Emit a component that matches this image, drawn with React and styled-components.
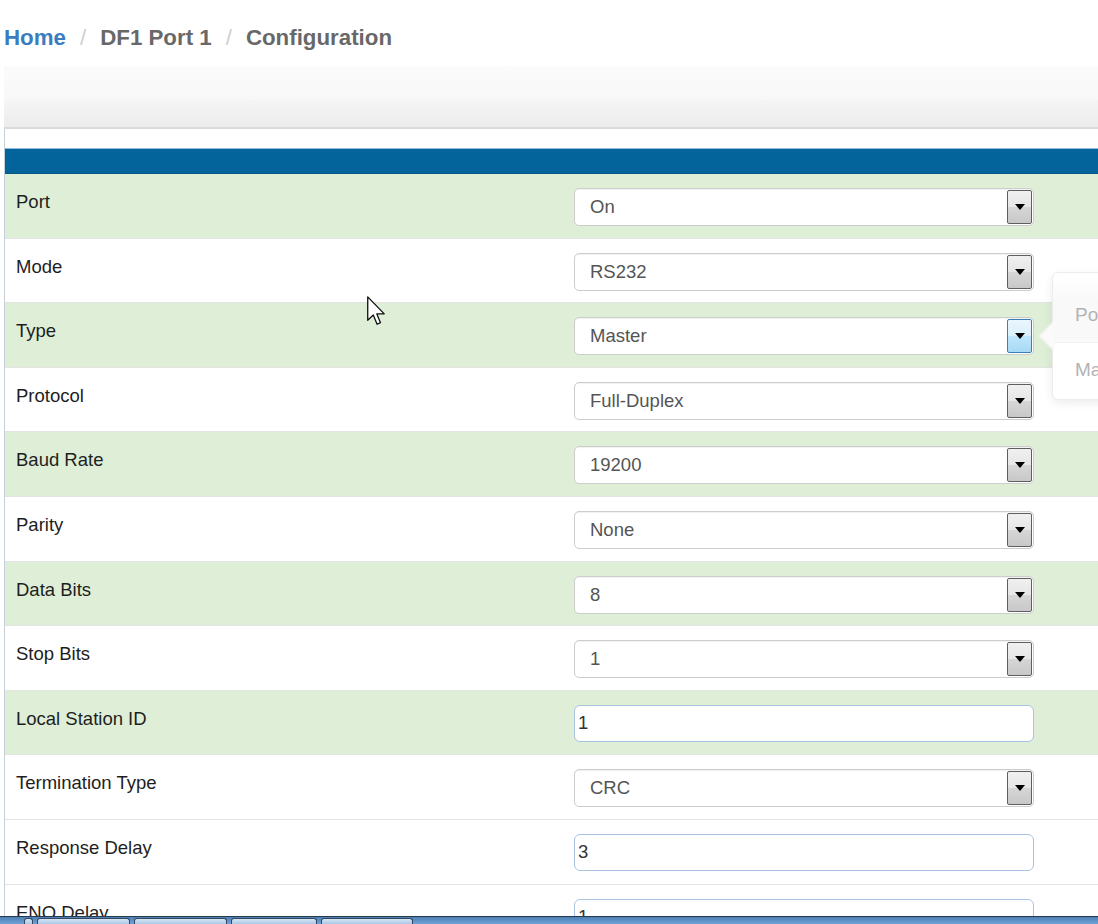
import React from 'react';
import styled, { createGlobalStyle } from 'styled-components';

const GlobalStyle = createGlobalStyle`
  html, body {
    margin: 0;
    padding: 0;
    background: #fff;
    overflow: hidden;
  }
  body {
    font-family: "Liberation Sans", Arial, sans-serif;
  }
`;

const fields = [
  { label: 'Port', value: 'On', tint: true },
  { label: 'Mode', value: 'RS232' },
  { label: 'Type', value: 'Master', tint: true, hover: true },
  { label: 'Protocol', value: 'Full-Duplex' },
  { label: 'Baud Rate', value: '19200', tint: true },
  { label: 'Parity', value: 'None' },
  { label: 'Data Bits', value: '8', tint: true },
  { label: 'Stop Bits', value: '1' },
  { label: 'Local Station ID', value: '1', tint: true, input: true },
  { label: 'Termination Type', value: 'CRC' },
  { label: 'Response Delay', value: '3', input: true },
  { label: 'ENQ Delay', value: '1', input: true },
];

export default function App() {
  return (
    <Page>
      <GlobalStyle />
      <Breadcrumb>
        <Crumb href="#" $active>Home</Crumb>
        <Sep>/</Sep>
        <Crumb>DF1 Port 1</Crumb>
        <Sep>/</Sep>
        <Crumb>Configuration</Crumb>
      </Breadcrumb>

      <Panel>
        <PanelHeading />
        <Toolbar />
        <Body>
          <Gap />
          <TitleBar />
          {fields.map((f) => (
            <Row key={f.label} $tint={f.tint}>
              <Label>{f.label}</Label>
              <Cell>
                {f.input ? (
                  <TextBox>{f.value}</TextBox>
                ) : (
                  <SelectBox>
                    <span>{f.value}</span>
                    <DropButton $hover={f.hover}>
                      <Caret />
                    </DropButton>
                  </SelectBox>
                )}
              </Cell>
            </Row>
          ))}
        </Body>
      </Panel>

      <Popover>
        <PopTitle>Port Type</PopTitle>
        <PopBody>Master / Slave</PopBody>
      </Popover>

      <Cursor width="19" height="31" viewBox="0 0 13 21">
        <path
          d="M0.5 0.5 L0.5 16.5 L4.3 12.9 L6.9 19.2 L9.2 18.2 L6.7 12.1 L11.8 12.1 Z"
          fill="#fff"
          stroke="#111"
          strokeWidth="0.9"
          strokeLinejoin="round"
        />
      </Cursor>

      <Taskbar>
        <TaskButton $w={7} />
        <TaskButton $w={91} />
        <TaskButton $w={91} />
        <TaskButton $w={84} />
        <TaskButton $w={90} />
      </Taskbar>
    </Page>
  );
}

const Page = styled.div`
  position: relative;
  width: 1098px;
  height: 924px;
  overflow: hidden;
`;

const Breadcrumb = styled.div`
  height: 66px;
  box-sizing: border-box;
  padding: 25px 0 0 4px;
  font-size: 22.3px;
  line-height: 1.2;
  font-weight: bold;
  white-space: nowrap;
`;

const Crumb = styled.a`
  color: ${(p) => (p.$active ? '#3a7cbf' : '#686868')};
  text-decoration: none;
`;

const Sep = styled.span`
  color: #cfcfcf;
  font-weight: normal;
  margin: 0 14px;
`;

const Panel = styled.div`
  margin-left: 4px;
  width: 1300px;
`;

const PanelHeading = styled.div`
  height: 34px;
  background: linear-gradient(#fbfbfb, #f8f8f8);
`;

const Toolbar = styled.div`
  height: 27px;
  background: linear-gradient(#f5f5f5, #ececec);
  border-bottom: 2px solid #d9d9d9;
`;

const Body = styled.div`
  border-left: 1px solid #c3d0da;
`;

const Gap = styled.div`
  height: 19px;
  background: #fff;
`;

const TitleBar = styled.div`
  height: 24px;
  background: #03639b;
  border-top: 1px solid #8fc0e0;
  border-bottom: 1px solid #0a5584;
`;

const Row = styled.div`
  display: grid;
  grid-template-columns: 569px 460px 1fr;
  height: 64.6px;
  box-sizing: border-box;
  border-bottom: 1px solid #e3e3e3;
  background: ${(p) => (p.$tint ? '#dfefd7' : '#fff')};
`;

const Label = styled.div`
  padding: 17px 0 0 11px;
  font-size: 18.5px;
  line-height: 1.2;
  color: #1e1e1e;
`;

const Cell = styled.div`
  padding-top: 14px;
`;

const SelectBox = styled.div`
  height: 38px;
  box-sizing: border-box;
  display: flex;
  align-items: center;
  justify-content: space-between;
  padding: 0 1px 0 15px;
  border: 1px solid #cdcdcd;
  border-radius: 5px;
  background: #fff;
  box-shadow: inset 0 1px 1px rgba(0, 0, 0, 0.06);
  font-size: 18.5px;
  color: #555;
`;

const DropButton = styled.div`
  width: 25px;
  height: 34px;
  box-sizing: border-box;
  display: flex;
  align-items: center;
  justify-content: center;
  border: 1px solid ${(p) => (p.$hover ? '#3c7fb1' : '#5f5f5f')};
  border-radius: 2px;
  background: ${(p) =>
    p.$hover
      ? 'linear-gradient(#eaf6fd, #d9f0fc 50%, #bee6fd 51%, #a7d9f5)'
      : 'linear-gradient(#f0f0f0, #e6e6e6 50%, #d6d6d6 51%, #c8c8c8)'};
`;

const Caret = styled.span`
  width: 0;
  height: 0;
  border-left: 5px solid transparent;
  border-right: 5px solid transparent;
  border-top: 6px solid #000;
`;

const TextBox = styled.div`
  height: 37px;
  box-sizing: border-box;
  display: flex;
  align-items: center;
  padding-left: 3px;
  border: 1px solid #a8c2e2;
  border-radius: 6px;
  background: #fff;
  font-size: 18.5px;
  color: #333;
`;

const Popover = styled.div`
  position: absolute;
  left: 1052px;
  top: 272px;
  width: 220px;
  height: 128px;
  box-sizing: border-box;
  background: #fff;
  border: 1px solid #ececec;
  border-radius: 6px;
  box-shadow: 0 3px 10px rgba(0, 0, 0, 0.08);
  font-size: 19px;
  color: #b3b3b3;
  white-space: nowrap;

  &::before {
    content: '';
    position: absolute;
    left: -15px;
    top: 48px;
    border-top: 15px solid transparent;
    border-bottom: 15px solid transparent;
    border-right: 15px solid #f0f0f0;
  }
  &::after {
    content: '';
    position: absolute;
    left: -13px;
    top: 49px;
    border-top: 14px solid transparent;
    border-bottom: 14px solid transparent;
    border-right: 14px solid #fafafa;
  }
`;

const PopTitle = styled.div`
  height: 70px;
  box-sizing: border-box;
  padding: 31px 0 0 22px;
  background: linear-gradient(#fff, #f9f9f9 40%);
  border-bottom: 1px solid #f0f0f0;
  border-radius: 6px 6px 0 0;
`;

const PopBody = styled.div`
  padding: 16px 0 0 22px;
`;

const Cursor = styled.svg`
  position: absolute;
  left: 367px;
  top: 296px;
`;

const Taskbar = styled.div`
  position: absolute;
  left: 0;
  right: 0;
  bottom: 0;
  height: 7px;
  display: flex;
  gap: 4px;
  padding-left: 24px;
  background: linear-gradient(#4d7fb4, #6fa2d6);
  border-top: 1px solid #27394d;
`;

const TaskButton = styled.div`
  width: ${(p) => p.$w}px;
  margin-top: 1px;
  border: 1px solid #34495f;
  border-bottom: none;
  border-radius: 3px 3px 0 0;
  background: linear-gradient(#d7e6f4, #a9c7e6);
`;
